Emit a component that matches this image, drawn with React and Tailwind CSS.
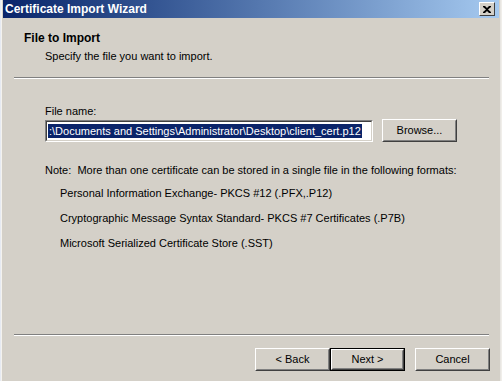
import React from "react";

const font = "font-['Tahoma','Liberation_Sans',sans-serif]";

function Button({ children, isDefault, className = "" }) {
  // classic 3D raised button; the default one gets a black outer ring
  return (
    <div className={`h-[23px] ${isDefault ? "border border-black" : ""} ${className}`}>
      <div className="h-full border border-t-white border-l-white border-r-[#404040] border-b-[#404040] bg-[#d4d0c8]">
        <div className="h-full flex items-center justify-center border border-t-[#d4d0c8] border-l-[#d4d0c8] border-r-[#808080] border-b-[#808080] text-[11px] text-black">
          {children}
        </div>
      </div>
    </div>
  );
}

function Separator({ className = "" }) {
  return (
    <div className={`flex flex-col ${className}`}>
      <div className="h-px bg-[#808080]" />
      <div className="h-px bg-white" />
    </div>
  );
}

export default function App() {
  const formats = [
    "Personal Information Exchange- PKCS #12 (.PFX,.P12)",
    "Cryptographic Message Syntax Standard- PKCS #7 Certificates (.P7B)",
    "Microsoft Serialized Certificate Store (.SST)",
  ];

  return (
    <div className={`w-[502px] h-[381px] flex bg-[#d4d0c8] overflow-hidden ${font}`}>
      {/* left window frame */}
      <div className="w-[3px] flex">
        <div className="w-px bg-[#e6eaf2]" />
        <div className="w-px bg-[#f4f2ee]" />
        <div className="w-px bg-[#d4d0c8]" />
      </div>

      <div className="flex-1 flex flex-col">
        {/* title bar */}
        <div className="h-[18px] flex items-center justify-between bg-gradient-to-r from-[#0a246a] to-[#a6caf0] pl-[2px] pr-[4px]">
          <span className="text-white font-bold text-[12px] leading-none">Certificate Import Wizard</span>
          <div className="w-[16px] h-[14px] border border-t-white border-l-white border-r-[#404040] border-b-[#404040] bg-[#d4d0c8] flex items-center justify-center">
            <svg width="8" height="7" viewBox="0 0 8 7">
              <path d="M0 0h2l2 2 2-2h2v1L5 3.5 8 6v1H6L4 5 2 7H0V6l3-2.5L0 1z" fill="black" />
            </svg>
          </div>
        </div>

        {/* header */}
        <div className="pl-[21px] pt-[13px] text-[11px] text-black">
          <div className="font-bold text-[12px] leading-[14px]">File to Import</div>
          <div className="pl-[21px] mt-[4px] leading-[14px]">Specify the file you want to import.</div>
        </div>

        <Separator className="ml-[11px] mr-[10px] mt-[14px]" />

        {/* body */}
        <div className="pl-[42px] pr-[10px] pt-[25px] text-[11px] text-black">
          <div className="leading-[14px]">File name:</div>
          <div className="flex items-center mt-[1px]">
            <div className="w-[328px] h-[22px] border border-t-[#808080] border-l-[#808080] border-r-white border-b-white">
              <div className="h-full border border-t-[#404040] border-l-[#404040] border-r-[#d4d0c8] border-b-[#d4d0c8] bg-white flex items-center pl-[1px] overflow-hidden whitespace-nowrap">
                <span className="bg-[#0a246a] text-white leading-[14px] px-px">
                  :\Documents and Settings\Administrator\Desktop\client_cert.p12
                </span>
              </div>
            </div>
            <Button className="w-[75px] ml-[9px]">Browse...</Button>
          </div>

          <div className="mt-[21px] leading-[14px]">
            Note:&nbsp; More than one certificate can be stored in a single file in the following formats:
          </div>
          <div className="pl-[15px] flex flex-col gap-[11px] mt-[9px]">
            {formats.map((f) => (
              <div key={f} className="leading-[14px]">{f}</div>
            ))}
          </div>
        </div>

        <div className="flex-1" />

        <Separator className="ml-[11px] mr-[10px]" />

        {/* footer buttons */}
        <div className="flex justify-end pr-[9px] pt-[12px] pb-[10px]">
          <Button className="w-[75px]">&lt; Back</Button>
          <Button isDefault className="w-[75px]">Next &gt;</Button>
          <Button className="w-[75px] ml-[10px]">Cancel</Button>
        </div>
      </div>

      {/* right window frame */}
      <div className="w-[3px] flex">
        <div className="w-px bg-[#d4d0c8]" />
        <div className="w-px bg-[#e8e6e2]" />
        <div className="w-px bg-[#f0eeea]" />
      </div>
    </div>
  );
}
